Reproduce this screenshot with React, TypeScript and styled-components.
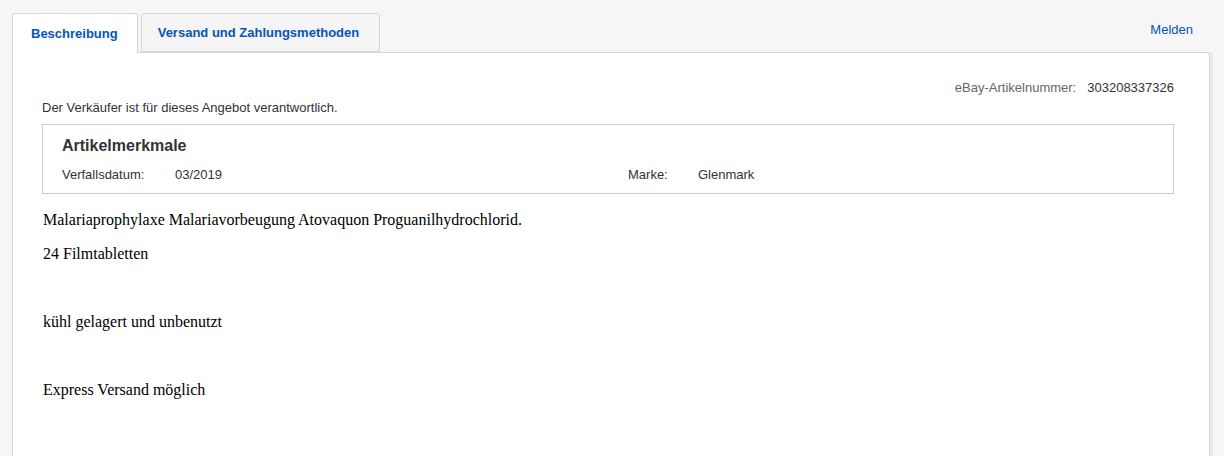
import React from "react";
import styled, { createGlobalStyle } from "styled-components";

const Global = createGlobalStyle`
  html, body { margin: 0; padding: 0; }
  body {
    background: #f6f6f6;
    font-family: "Liberation Sans", Arial, Helvetica, sans-serif;
    color: #333;
  }
`;

const Page = styled.div`
  padding: 12px 10px 0 12px;
  height: 444px;
  overflow: hidden;
`;

const TabBar = styled.div`
  display: flex;
  align-items: flex-end;
  gap: 3px;
  height: 40px;
  position: relative;
  z-index: 1;
`;

const Tab = styled.div<{ $active?: boolean }>`
  height: ${(p) => (p.$active ? "40px" : "39px")};
  box-sizing: border-box;
  display: flex;
  align-items: center;
  justify-content: center;
  padding: ${(p) => (p.$active ? "0 19px 0 18px" : "0 20px 0 16px")};
  border: 1px solid #d6d6d6;
  border-bottom: ${(p) => (p.$active ? "none" : "1px solid #d6d6d6")};
  border-radius: 3px 3px 0 0;
  background: ${(p) => (p.$active ? "#fff" : "#f5f5f5")};
  color: #0654ba;
  font-size: 13px;
  font-weight: bold;
  margin-bottom: ${(p) => (p.$active ? "-1px" : "0")};
`;

const ReportLink = styled.a`
  margin-left: auto;
  align-self: flex-start;
  margin-top: 10px;
  margin-right: 21px;
  color: #0654ba;
  font-size: 13px;
  text-decoration: none;
`;

const Panel = styled.div`
  background: #fff;
  border: 1px solid #d6d6d6;
  border-radius: 0 3px 0 0;
  box-shadow: 3px 0 0 #e9e9e9;
  width: 1198px;
  box-sizing: border-box;
  padding: 27px 35px 60px 29px;
  height: 420px;
`;

const ItemNumberRow = styled.div`
  display: flex;
  justify-content: flex-end;
  gap: 11px;
  font-size: 13px;
  line-height: 16px;
`;

const ItemNumberLabel = styled.span`
  color: #666;
`;

const ItemNumberValue = styled.span`
  color: #333;
`;

const SellerNote = styled.div`
  font-size: 13px;
  line-height: 16px;
  color: #333;
  margin-top: 4px;
`;

const SpecsBox = styled.div`
  border: 1px solid #ccc;
  margin-top: 8px;
  padding: 11px 19px 10px 19px;
`;

const SpecsTitle = styled.h2`
  margin: 0;
  font-size: 16px;
  font-weight: bold;
  color: #333;
  line-height: 20px;
`;

const SpecsGrid = styled.div`
  display: grid;
  grid-template-columns: 113px 453px 70px 1fr;
  margin-top: 11px;
  font-size: 13px;
  line-height: 16px;
  color: #333;
`;

const SpecLabel = styled.span`
  color: #333;
`;

const SpecValue = styled.span`
  color: #333;
`;

const Description = styled.div`
  font-family: "Liberation Serif", "Times New Roman", serif;
  font-size: 16px;
  line-height: 18px;
  color: #000;
  padding-left: 1px;
  margin-top: 17px;
`;

const Para = styled.p`
  margin: 0 0 16px 0;
  min-height: 18px;
`;

export default function App() {
  return (
    <>
      <Global />
      <Page>
        <TabBar>
          <Tab $active>Beschreibung</Tab>
          <Tab>Versand und Zahlungsmethoden</Tab>
          <ReportLink href="#">Melden</ReportLink>
        </TabBar>
        <Panel>
          <ItemNumberRow>
            <ItemNumberLabel>eBay-Artikelnummer:</ItemNumberLabel>
            <ItemNumberValue>303208337326</ItemNumberValue>
          </ItemNumberRow>
          <SellerNote>Der Verkäufer ist für dieses Angebot verantwortlich.</SellerNote>
          <SpecsBox>
            <SpecsTitle>Artikelmerkmale</SpecsTitle>
            <SpecsGrid>
              <SpecLabel>Verfallsdatum:</SpecLabel>
              <SpecValue>03/2019</SpecValue>
              <SpecLabel>Marke:</SpecLabel>
              <SpecValue>Glenmark</SpecValue>
            </SpecsGrid>
          </SpecsBox>
          <Description>
            <Para>Malariaprophylaxe Malariavorbeugung Atovaquon Proguanilhydrochlorid.</Para>
            <Para>24 Filmtabletten</Para>
            <Para>{"\u00a0"}</Para>
            <Para>kühl gelagert und unbenutzt</Para>
            <Para>{"\u00a0"}</Para>
            <Para>Express Versand möglich</Para>
          </Description>
        </Panel>
      </Page>
    </>
  );
}
